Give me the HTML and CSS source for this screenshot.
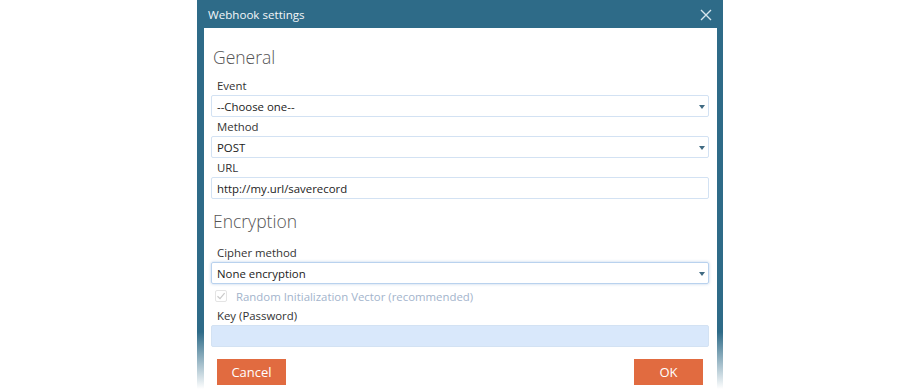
FILE: index.html
```html
<!DOCTYPE html>
<html lang="en">
<head>
  <meta charset="UTF-8">
  <title>Webhook settings</title>
  <link rel="stylesheet" href="styles.css">
</head>
<body>

<div class="dialog">
  <div class="dialog-header">
    <span class="dialog-title">Webhook settings</span>
    <svg class="close-icon" width="12" height="12" viewBox="0 0 12 12">
      <path d="M1 1 L11 11 M11 1 L1 11" stroke="#d6e6ee" stroke-width="1.4" fill="none"/>
    </svg>
  </div>

  <div class="dialog-body">
    <h3 class="section-title">General</h3>

    <label class="field-label">Event</label>
    <div class="select-box">
      <span>--Choose one--</span>
      <span class="caret"></span>
    </div>

    <label class="field-label">Method</label>
    <div class="select-box">
      <span>POST</span>
      <span class="caret"></span>
    </div>

    <label class="field-label">URL</label>
    <div class="text-box">http://my.url/saverecord</div>

    <h3 class="section-title second">Encryption</h3>

    <label class="field-label">Cipher method</label>
    <div class="select-box focused">
      <span>None encryption</span>
      <span class="caret"></span>
    </div>

    <div class="check-row">
      <span class="checkbox">
        <svg width="10" height="10" viewBox="0 0 10 10">
          <path d="M1.5 5.2 L4 7.6 L8.6 2.2" stroke="#c9c9c9" stroke-width="1.2" fill="none"/>
        </svg>
      </span>
      <span class="check-text">Random Initialization Vector (recommended)</span>
    </div>

    <label class="field-label">Key (Password)</label>
    <div class="text-box disabled"></div>

    <div class="buttons">
      <button class="btn">Cancel</button>
      <button class="btn">OK</button>
    </div>
  </div>
</div>

</body>
</html>
```

FILE: styles.css
```css
body {
  margin: 0;
  background-color: #fff;
  font-family: 'Open Sans', sans-serif;
  height: 389px;
  overflow: hidden;
}
.dialog {
  width: 526px;
  margin: 0 auto;
  height: 389px;
  background: linear-gradient(to bottom, #2e6b88 0, #2e6b88 332px, #ffffff 389px);
  display: flex;
  flex-direction: column;
}
.dialog-header {
  height: 28px;
  display: flex;
  align-items: center;
  justify-content: space-between;
  padding: 0 11px 0 11px;
  flex-shrink: 0;
}
.dialog-title {
  color: #f2f6f8;
  font-size: 11.6px;
}
.close-icon {
  display: block;
  margin-top: 1px;
}
.dialog-body {
  background-color: #fff;
  margin: 0 6px 0 7px;
  padding: 15px 8px 0 7px;
  flex: 1;
}
.section-title {
  margin: 0 0 6px 2px;
  font-size: 17.5px;
  font-weight: 300;
  color: #555;
  line-height: 28px;
}
.section-title.second {
  margin-top: 8px;
  margin-bottom: 9px;
}
.field-label {
  display: block;
  font-size: 11.4px;
  color: #333;
  line-height: 17px;
  padding-left: 6px;
  margin-bottom: 1px;
}
.select-box, .text-box {
  height: 22px;
  box-sizing: border-box;
  border: 1px solid #d3e2f3;
  border-radius: 2px;
  display: flex;
  align-items: center;
  justify-content: space-between;
  padding: 0 3px 0 5px;
  font-size: 11.4px;
  color: #222;
  margin-bottom: 1px;
}
.select-box.focused {
  border-color: #b9d2ee;
  box-shadow: 0 0 3px rgba(120, 160, 210, 0.5);
}
.text-box.disabled {
  background-color: #d9e8fb;
  border-color: #d3e2f3;
}
.caret {
  width: 0;
  height: 0;
  border-left: 3.5px solid transparent;
  border-right: 3.5px solid transparent;
  border-top: 4px solid #3f6a82;
  margin-top: 1px;
}
.check-row {
  display: flex;
  align-items: center;
  height: 22px;
  padding-left: 4px;
}
.checkbox {
  width: 10px;
  height: 10px;
  border: 1px solid #e4e4e4;
  border-radius: 2px;
  display: flex;
  align-items: center;
  justify-content: center;
  margin-right: 9px;
}
.check-text {
  font-size: 11.4px;
  color: #a3b4cc;
}
.buttons {
  display: flex;
  justify-content: space-between;
  padding: 11px 6px 0 6px;
}
.btn {
  width: 69px;
  height: 26px;
  background-color: #e16b40;
  color: #fff;
  border: none;
  font-family: 'Open Sans', sans-serif;
  font-size: 13px;
  padding: 0;
}
```
